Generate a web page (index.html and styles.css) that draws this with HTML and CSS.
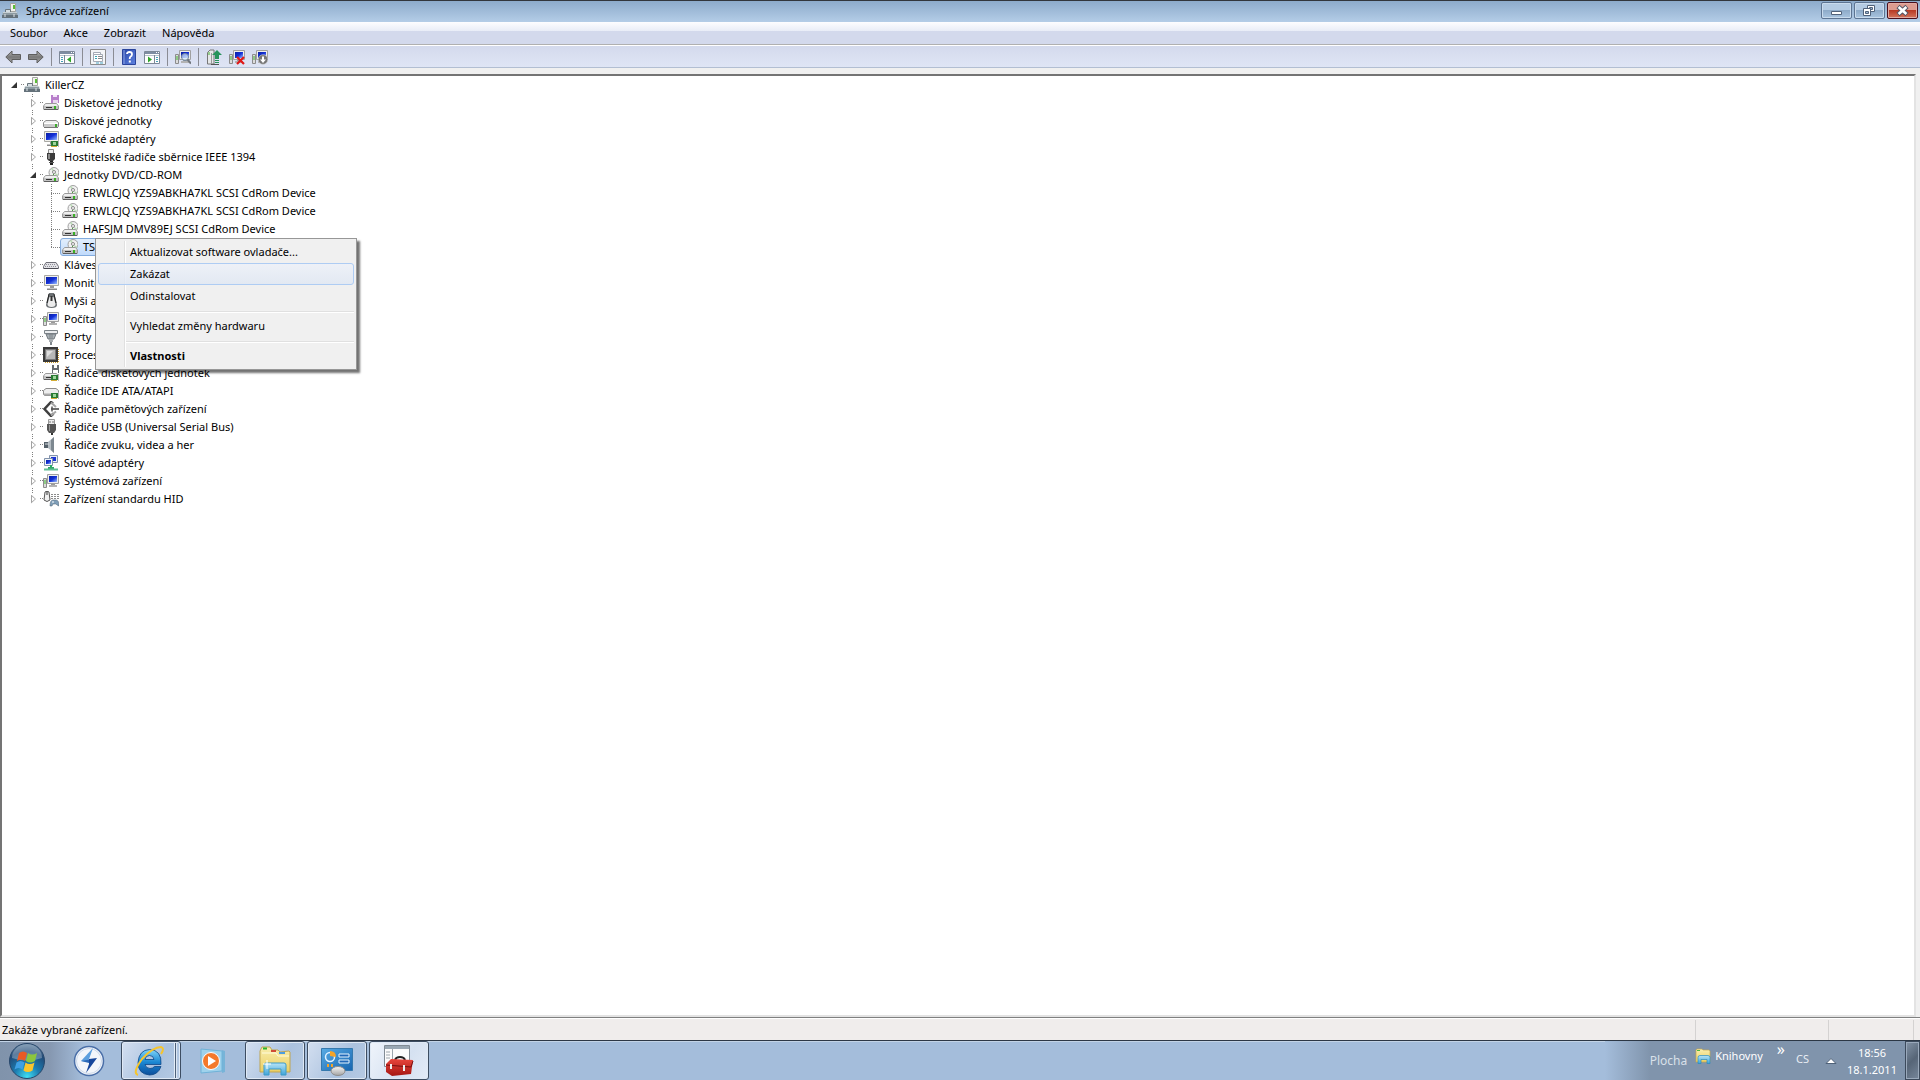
FILE: index.html
```html
<!DOCTYPE html>
<html lang="cs">
<head>
<meta charset="utf-8">
<title>Správce zařízení</title>
<link rel="stylesheet" href="styles.css">
</head>
<body>
<svg class="defs" width="0" height="0" aria-hidden="true">
  <defs>
    <linearGradient id="gMetal" x1="0" y1="0" x2="0" y2="1"><stop offset="0" stop-color="#f6f6f6"/><stop offset="1" stop-color="#a3a3a3"/></linearGradient>
    <linearGradient id="gScreen" x1="0" y1="0" x2="1" y2="1"><stop offset="0" stop-color="#0a1fa0"/><stop offset=".5" stop-color="#1330d8"/><stop offset="1" stop-color="#9cc0ff"/></linearGradient>
    <linearGradient id="gArrow" x1="0" y1="0" x2="0" y2="1"><stop offset="0" stop-color="#b5b5b5"/><stop offset=".5" stop-color="#787878"/><stop offset="1" stop-color="#a8a8a8"/></linearGradient>
    <linearGradient id="gHelp" x1="0" y1="0" x2="1" y2="1"><stop offset="0" stop-color="#2745a8"/><stop offset="1" stop-color="#5f83e0"/></linearGradient>
    <linearGradient id="gFolder" x1="0" y1="0" x2="0" y2="1"><stop offset="0" stop-color="#f8eeae"/><stop offset="1" stop-color="#eccf62"/></linearGradient>
    <linearGradient id="gGlass" x1="0" y1="0" x2="0" y2="1"><stop offset="0" stop-color="#b6e4f7"/><stop offset="1" stop-color="#3fa4d8"/></linearGradient>
    <radialGradient id="gOrb" cx=".5" cy=".95" r=".9"><stop offset="0" stop-color="#3fe0f4"/><stop offset=".4" stop-color="#1c7cb0"/><stop offset=".8" stop-color="#214a78"/><stop offset="1" stop-color="#4f7396"/></radialGradient>
    <linearGradient id="gIe" x1="0" y1="0" x2="0" y2="1"><stop offset="0" stop-color="#7fd5fa"/><stop offset=".5" stop-color="#1b87d2"/><stop offset="1" stop-color="#0d4f9c"/></linearGradient>
    <linearGradient id="gPanel" x1="0" y1="0" x2="1" y2="1"><stop offset="0" stop-color="#58abe4"/><stop offset="1" stop-color="#1765b0"/></linearGradient>
    <linearGradient id="gRed" x1="0" y1="0" x2="0" y2="1"><stop offset="0" stop-color="#e8463c"/><stop offset="1" stop-color="#a51612"/></linearGradient>
  </defs>
  <symbol id="drive" viewBox="0 0 16 16">
    <path d="M2.500 8.500h11l2 2.500v3q0 .5-.5.5H1q-.5 0-.5-.5v-3z" fill="#efefef" stroke="#9a9a9a"/>
    <path d="M1 11h14v3H1z" fill="#c2c2c2"/><path d="M1 14.500h14" stroke="#5f5f5f"/>
    <path d="M3 12.500h6" stroke="#333"/><path d="M11 11h2v3h-2z" fill="#39b026"/>
  </symbol>
  <symbol id="i-computer" viewBox="0 0 16 16">
    <path d="M8.500.5h5v8h-5z" fill="#f2f2ee" stroke="#a5a5a0"/><path d="M11 2h2v4h-2z" fill="#59bd35"/>
    <path d="M3.500 6.500h5v3h-5z" fill="#d5dde2" stroke="#68757c"/>
    <path d="M1 9h14l1 5.500H0z" fill="#8e9ba2"/><path d="M1 9.500h14" stroke="#c7d0d4"/>
    <path d="M0 12h16v3H0z" fill="#64717a"/><path d="M3 11v3M12 11v3" stroke="#dfe5e8"/>
  </symbol>
  <symbol id="i-floppy" viewBox="0 0 16 16">
    <path d="M8 0h8v8H8z" fill="#b87fcb"/><path d="M10 0h4v2h-4z" fill="#f4e8f8"/><path d="M10 5h5v3h-5z" fill="#ead7f0"/><use href="#drive"/>
  </symbol>
  <symbol id="i-disk" viewBox="0 0 16 16">
    <path d="M3 7.500h10l2.500 2v4l-1 1h-13l-1-1v-4z" fill="#f0f0f0" stroke="#8c8c8c"/>
    <path d="M1 10.500h14" stroke="#fff"/><path d="M1 11h14v3H1z" fill="#cbcbcb"/><path d="M1 14.500h14" stroke="#777"/><path d="M12 11h2v3h-2z" fill="#3cab2d"/>
  </symbol>
  <symbol id="monitor" viewBox="0 0 16 16">
    <path d="M1.500.5h14v10h-14z" fill="#f0f0ec" stroke="#a9a9a4"/><path d="M3 2h11v7H3z" fill="url(#gScreen)"/>
    <path d="M7 11h4v2H7z" fill="#9a9a9a"/><path d="M4 13h10v2H4z" fill="#c5c5c5"/><path d="M4 14.500h10" stroke="#8a8a8a"/>
  </symbol>
  <symbol id="card" viewBox="0 0 16 16">
    <path d="M8 10h7v5H8z" fill="#2a7b35"/><path d="M10 11h3v3h-3z" fill="#9fd59c"/><path d="M8 15.500h6" stroke="#d3ac35"/><path d="M15.500 9v7" stroke="#b7b7b7"/>
  </symbol>
  <symbol id="i-display" viewBox="0 0 16 16"><use href="#monitor"/><use href="#card"/></symbol>
  <symbol id="i-monitor" viewBox="0 0 16 16"><use href="#monitor"/></symbol>
  <symbol id="i-firewire" viewBox="0 0 16 16">
    <path d="M5.500.5h5v4h-5z" fill="#eee" stroke="#8b8b8b"/><path d="M4 4h8v6l-2 2H6l-2-2z" fill="#3b3b3b"/><path d="M5 5h2v5H5z" fill="#8c8c8c"/><path d="M7 12h3v4H7z" fill="#222"/><path d="M6 13.500h5" stroke="#555"/>
  </symbol>
  <symbol id="i-cd" viewBox="0 0 16 16">
    <circle cx="11" cy="5.500" r="5" fill="#f1f1f1" stroke="#a0a0a0"/><path d="M11 5.500 8 2l2-1zM11 5.500l3 4 1-2z" fill="#b9dcb5"/><circle cx="11" cy="5" r="1.500" fill="#fff" stroke="#888"/><path d="M10.500 7v3" stroke="#49a53a"/><use href="#drive"/>
  </symbol>
  <symbol id="i-keyboard" viewBox="0 0 16 16">
    <path d="M3 5.500h10l2.500 4v2H.5v-2z" fill="#e2e2e6" stroke="#6f6f78"/><path d="M3 7.500h10M2 9.500h12" stroke="#8e8e98" stroke-dasharray="1 1"/><path d="M1 11.500h14" stroke="#4a4a52"/>
  </symbol>
  <symbol id="i-mouse" viewBox="0 0 16 16">
    <path d="M6 0h5l2 7 1 5q0 3-5.500 3T3 12l1-5z" fill="#6b7073"/><path d="M6.500 4h4l2 7q0 3-4 3t-4-3z" fill="#ececec"/><path d="M6 1l-2 9M11 1l2 9" stroke="#222" fill="none"/><path d="M8.500 3v5" stroke="#333" stroke-width="2"/>
  </symbol>
  <symbol id="i-pc" viewBox="0 0 16 16">
    <path d="M.5 5.500h3v9h-3z" fill="#dcdcdc" stroke="#8c8c8c"/><path d="M2 7v4" stroke="#40b82e"/>
    <path d="M4.500 1.500h11v9h-11z" fill="#eee" stroke="#a0a0a0"/><path d="M6 3h8v6H6z" fill="url(#gScreen)"/><path d="M8 11h4v1H8z" fill="#999"/><path d="M6 13h8" stroke="#b3b3b3" stroke-width="2"/>
  </symbol>
  <symbol id="i-port" viewBox="0 0 16 16">
    <path d="M1.500 1.500h13v3h-13z" fill="#eaecee" stroke="#7d8489"/><path d="M3 5h10l-2 5H5z" fill="#aab1b6" stroke="#72797e"/><path d="M6 10h4v3H6z" fill="#d4d8db"/><path d="M7 5v8M9 5v8" stroke="#7c8387"/><path d="M7 13h2v3H7z" fill="#81888d"/>
  </symbol>
  <symbol id="i-cpu" viewBox="0 0 16 16">
    <path d="M15.500 2v13M2 15.500h13" stroke="#c99a2c" stroke-dasharray="1 1"/><path d="M0 0h15v15H0z" fill="#393939"/><path d="M2.500 2.500h10v10h-10z" fill="#b7b7b7" stroke="#777"/><path d="M4 4h6L4 10z" fill="#dedede"/>
  </symbol>
  <symbol id="i-fdc" viewBox="0 0 16 16">
    <path d="M9 0h7v8H9z" fill="#656b70"/><path d="M11 0h3v3h-3zM10 5h5v3h-5z" fill="#fff"/><use href="#drive"/><use href="#card"/>
  </symbol>
  <symbol id="i-ide" viewBox="0 0 16 16"><path d="M3 5.500h10l2.500 2v4l-1 1h-13l-1-1v-4z" fill="#eee" stroke="#8c8c8c"/><path d="M1 11.500h13" stroke="#aaa" stroke-width="2"/><use href="#card"/></symbol>
  <symbol id="i-memory" viewBox="0 0 16 16">
    <path d="M10 2.500 8 1 1.500 8 8 15l2.500-2.500" fill="none" stroke="#3f3f3f" stroke-width="2.500"/><path d="M8 1.500 13 6M8 14.500l5-4" stroke="#a6a6a6" stroke-width="2"/><path d="M8 8h8" stroke="#6f6f6f" stroke-width="2"/><path d="M9 5.500v5" stroke="#555" stroke-width="1.500"/>
  </symbol>
  <symbol id="i-usb" viewBox="0 0 16 16">
    <path d="M5.500.5h6v5h-6z" fill="#eee" stroke="#999"/><path d="M7 2v2M10 2v2" stroke="#777"/><path d="M4 5h9v6l-2 3H6l-2-3z" fill="#555"/><path d="M6 6h1v6H6z" fill="#999"/><path d="M8 14h2v2H8z" fill="#333"/>
  </symbol>
  <symbol id="i-sound" viewBox="0 0 16 16">
    <path d="M1 5h4v6H1z" fill="#55616a"/><path d="M5 5l6-5v16l-6-5z" fill="#b4bcc2"/><path d="M8 3l3-3v16l-3-3z" fill="#7d8890"/><path d="M2 7h4" stroke="#d5dade"/>
  </symbol>
  <symbol id="i-network" viewBox="0 0 16 16">
    <path d="M6.500.5h8v7h-8z" fill="#e9eef5" stroke="#8293ac"/><path d="M8 2h5v4H8z" fill="#1b35d5"/><path d="M1.500 3.500h8v7h-8z" fill="#f1f4f8" stroke="#8293ac"/><path d="M3 5h5v4H3z" fill="url(#gScreen)"/><path d="M7 10h2v3H7zM5 12h6v2H5z" fill="#2fa866"/><path d="M1 14.500h14" stroke="#5fbd93" stroke-width="2"/>
  </symbol>
  <symbol id="i-hid" viewBox="0 0 16 16">
    <path d="M2 1q2-2 4 0l1 8q-3 3-6 0z" fill="#f0f0f0" stroke="#555"/><path d="M4 0v4" stroke="#333"/><path d="M8 3.500h8M8 5.500h8M8 7.500h8" stroke="#8b8b8b" stroke-dasharray="2 1"/><path d="M7 15q0-6 3-6h3q3 0 3 6l-2-1-1-1h-3l-1 2z" fill="#7f9eb8" stroke="#4d6172" stroke-width=".5"/><path d="M9 11h2" stroke="#fff"/>
  </symbol>
  <symbol id="i-back" viewBox="0 0 16 16"><path d="M.8 8 7 2v3.500h8.500v5H7V14z" fill="url(#gArrow)" stroke="#5e5e5e"/></symbol>
  <symbol id="i-forward" viewBox="0 0 16 16"><path d="M15.200 8 9 2v3.500H.5v5H9V14z" fill="url(#gArrow)" stroke="#5e5e5e"/></symbol>
  <symbol id="pane" viewBox="0 0 16 16"><path d="M.5 2.500h15v12H.5z" fill="#fdfdfd" stroke="#7d8898"/><path d="M1 4h14" stroke="#7e8ca2" stroke-width="2"/><path d="M12 3.500h3" stroke="#fff" stroke-dasharray="1 1"/><path d="M1 6.500h14" stroke="#b8c0cc"/></symbol>
  <symbol id="i-tree" viewBox="0 0 16 16"><use href="#pane"/><path d="M5.500 6v8" stroke="#7d8898"/><path d="M2 8.500h2M2 10.500h2M2 12.500h2" stroke="#45a0b8"/><path d="M12 7.500v6L8 10.500z" fill="#30a52a"/></symbol>
  <symbol id="i-run" viewBox="0 0 16 16"><use href="#pane"/><path d="M10.500 6v8" stroke="#7d8898"/><path d="M12 8.500h2M12 10.500h2M12 12.500h2" stroke="#45a0b8"/><path d="M4 7.500v6l4-3z" fill="#30a52a"/></symbol>
  <symbol id="i-props" viewBox="0 0 16 16"><path d="M.5.5h15v15H.5z" fill="#f4f5f7" stroke="#8b8b8b"/><path d="M3.500 3.500h7v2h-7zM3.500 5.500h9v7h-9z" fill="#fff" stroke="#a4aab5"/><path d="M5 7.500h2M5 9.500h2" stroke="#39a5b5"/><path d="M8 7.500h4M8 9.500h4" stroke="#888"/><path d="M6 14h3M10 14h3" stroke="#4da7c5"/></symbol>
  <symbol id="i-help" viewBox="0 0 16 16"><path d="M1.500.5h13v15h-13z" fill="url(#gHelp)" stroke="#2a449c"/><path d="M3 1v14" stroke="#8da5e6"/><path d="M6 5q0-2 2.500-2T11 5.300Q11 7 9.500 7.600 8.700 8 8.700 10" fill="none" stroke="#fff" stroke-width="1.800"/><path d="M7.800 11.500h2v2h-2z" fill="#fff"/></symbol>
  <symbol id="i-scan" viewBox="0 0 16 16"><use href="#i-pc"/><circle cx="10" cy="8" r="3.500" fill="#d9ecf9" fill-opacity=".7" stroke="#72879b"/><path d="M12.500 10.500 16 14.500" stroke="#70767c" stroke-width="2"/></symbol>
  <symbol id="i-update" viewBox="0 0 16 16"><path d="M1.500 3.500 4 1h4v14H1.500z" fill="#e6e8e8" stroke="#777"/><path d="M3 3v3" stroke="#48b135"/><path d="M5.500 4v11" stroke="#999"/><path d="M5 15.500h8" stroke="#555"/><path d="M11 1l5 5h-3v4H9V6H6z" fill="#27935a"/><path d="M9 11.500h4M9 13.500h4" stroke="#27935a"/></symbol>
  <symbol id="i-uninstall" viewBox="0 0 16 16"><use href="#i-pc"/><path d="M8 8l7 7M15 8l-7 7" stroke="#e01818" stroke-width="2.200"/></symbol>
  <symbol id="i-disable" viewBox="0 0 16 16"><use href="#i-pc"/><circle cx="11" cy="10.500" r="4.800" fill="#777" stroke="#ccc" stroke-width=".6"/><path d="M10 7.500h2v3h2l-3 3.500-3-3.500h2z" fill="#fff"/></symbol>
  <symbol id="i-folder" viewBox="0 0 16 16"><path d="M1 2l1-1h5l1 1h6l1 1v11H1z" fill="url(#gFolder)" stroke="#c5a84c" stroke-width=".7"/><path d="M2 2.500h3" stroke="#4cb93f"/><path d="M3 15.500v-6q0-2 2-2h8q2 0 2 2v6h-3v-4H6v4z" fill="url(#gGlass)" stroke="#288cc1" stroke-width=".7"/></symbol>
</svg>

<header class="titlebar">
  <svg class="ico"><use href="#i-computer"/></svg>
  <h1>Správce zařízení</h1>
  <div class="caption-buttons">
    <button class="cap" aria-label="Minimalizovat"><svg viewBox="0 0 29 15"><path d="M9.500 8.500h10v3h-10z" fill="#fff" stroke="#51627a"/></svg></button>
    <button class="cap" aria-label="Obnovit"><svg viewBox="0 0 29 15"><path d="M12.500 2.500h7v6h-7z" fill="#fff" stroke="#51627a"/><path d="M14.500 4.500h3v2h-3z" fill="#9db8d4" stroke="#51627a"/><path d="M8.500 5.500h7v7h-7z" fill="#fff" stroke="#51627a"/><path d="M10.500 8.500h3v2h-3z" fill="#9db8d4" stroke="#51627a"/></svg></button>
    <button class="cap close" aria-label="Zavřít"><svg viewBox="0 0 29 15"><path d="M10 3.500l9 8M19 3.500l-9 8" stroke="#535666" stroke-width="4.600"/><path d="M10.600 4l7.800 7M18.400 4l-7.800 7" stroke="#fff" stroke-width="2.600"/></svg></button>
  </div>
</header>

<nav class="menubar">
  <button>Soubor</button><button>Akce</button><button>Zobrazit</button><button>Nápověda</button>
</nav>

<div class="toolbar" role="toolbar">
  <button aria-label="Zpět"><svg class="ico"><use href="#i-back"/></svg></button>
  <button aria-label="Vpřed"><svg class="ico"><use href="#i-forward"/></svg></button>
  <i class="tsep"></i>
  <button aria-label="Strom konzoly"><svg class="ico"><use href="#i-tree"/></svg></button>
  <i class="tsep"></i>
  <button aria-label="Vlastnosti"><svg class="ico"><use href="#i-props"/></svg></button>
  <i class="tsep"></i>
  <button aria-label="Nápověda"><svg class="ico"><use href="#i-help"/></svg></button>
  <button aria-label="Podokno akcí"><svg class="ico"><use href="#i-run"/></svg></button>
  <i class="tsep"></i>
  <button aria-label="Vyhledat změny hardwaru"><svg class="ico"><use href="#i-scan"/></svg></button>
  <i class="tsep"></i>
  <button aria-label="Aktualizovat software ovladače"><svg class="ico"><use href="#i-update"/></svg></button>
  <button aria-label="Odinstalovat"><svg class="ico"><use href="#i-uninstall"/></svg></button>
  <button aria-label="Zakázat"><svg class="ico"><use href="#i-disable"/></svg></button>
</div>

<main class="client">
  <ul class="tree">
    <li><div class="row root"><button class="twisty open" aria-label="Sbalit"></button><svg class="ico"><use href="#i-computer"/></svg><span>KillerCZ</span></div>
      <ul class="branch">
        <li><div class="row"><button class="twisty" aria-label="Rozbalit"></button><svg class="ico"><use href="#i-floppy"/></svg><span>Disketové jednotky</span></div></li>
        <li><div class="row"><button class="twisty" aria-label="Rozbalit"></button><svg class="ico"><use href="#i-disk"/></svg><span>Diskové jednotky</span></div></li>
        <li><div class="row"><button class="twisty" aria-label="Rozbalit"></button><svg class="ico"><use href="#i-display"/></svg><span>Grafické adaptéry</span></div></li>
        <li><div class="row"><button class="twisty" aria-label="Rozbalit"></button><svg class="ico"><use href="#i-firewire"/></svg><span>Hostitelské řadiče sběrnice IEEE 1394</span></div></li>
        <li><div class="row"><button class="twisty open" aria-label="Sbalit"></button><svg class="ico"><use href="#i-cd"/></svg><span>Jednotky DVD/CD-ROM</span></div>
          <ul class="leaves">
            <li class="row"><svg class="ico"><use href="#i-cd"/></svg><span>ERWLCJQ YZS9ABKHA7KL SCSI CdRom Device</span></li>
            <li class="row"><svg class="ico"><use href="#i-cd"/></svg><span>ERWLCJQ YZS9ABKHA7KL SCSI CdRom Device</span></li>
            <li class="row"><svg class="ico"><use href="#i-cd"/></svg><span>HAFSJM DMV89EJ SCSI CdRom Device</span></li>
            <li class="row"><div class="selected"><svg class="ico"><use href="#i-cd"/></svg><span>TSST</span></div></li>
          </ul>
        </li>
        <li><div class="row"><button class="twisty" aria-label="Rozbalit"></button><svg class="ico"><use href="#i-keyboard"/></svg><span>Klávesnice</span></div></li>
        <li><div class="row"><button class="twisty" aria-label="Rozbalit"></button><svg class="ico"><use href="#i-monitor"/></svg><span>Monitory</span></div></li>
        <li><div class="row"><button class="twisty" aria-label="Rozbalit"></button><svg class="ico"><use href="#i-mouse"/></svg><span>Myši a jiná</span></div></li>
        <li><div class="row"><button class="twisty" aria-label="Rozbalit"></button><svg class="ico"><use href="#i-pc"/></svg><span>Počítač</span></div></li>
        <li><div class="row"><button class="twisty" aria-label="Rozbalit"></button><svg class="ico"><use href="#i-port"/></svg><span>Porty</span></div></li>
        <li><div class="row"><button class="twisty" aria-label="Rozbalit"></button><svg class="ico"><use href="#i-cpu"/></svg><span>Procesory</span></div></li>
        <li><div class="row"><button class="twisty" aria-label="Rozbalit"></button><svg class="ico"><use href="#i-fdc"/></svg><span>Řadiče disketových jednotek</span></div></li>
        <li><div class="row"><button class="twisty" aria-label="Rozbalit"></button><svg class="ico"><use href="#i-ide"/></svg><span>Řadiče IDE ATA/ATAPI</span></div></li>
        <li><div class="row"><button class="twisty" aria-label="Rozbalit"></button><svg class="ico"><use href="#i-memory"/></svg><span>Řadiče paměťových zařízení</span></div></li>
        <li><div class="row"><button class="twisty" aria-label="Rozbalit"></button><svg class="ico"><use href="#i-usb"/></svg><span>Řadiče USB (Universal Serial Bus)</span></div></li>
        <li><div class="row"><button class="twisty" aria-label="Rozbalit"></button><svg class="ico"><use href="#i-sound"/></svg><span>Řadiče zvuku, videa a her</span></div></li>
        <li><div class="row"><button class="twisty" aria-label="Rozbalit"></button><svg class="ico"><use href="#i-network"/></svg><span>Síťové adaptéry</span></div></li>
        <li><div class="row"><button class="twisty" aria-label="Rozbalit"></button><svg class="ico"><use href="#i-pc"/></svg><span>Systémová zařízení</span></div></li>
        <li><div class="row"><button class="twisty" aria-label="Rozbalit"></button><svg class="ico"><use href="#i-hid"/></svg><span>Zařízení standardu HID</span></div></li>
      </ul>
    </li>
  </ul>
</main>

<div class="context-menu" role="menu">
  <button role="menuitem">Aktualizovat software ovladače...</button>
  <button role="menuitem" class="hot">Zakázat</button>
  <button role="menuitem">Odinstalovat</button>
  <hr>
  <button role="menuitem">Vyhledat změny hardwaru</button>
  <hr>
  <button role="menuitem" class="default">Vlastnosti</button>
</div>

<div class="statusbar"><span class="message">Zakáže vybrané zařízení.</span><span class="cell wide"></span><span class="cell"></span></div>

<footer class="taskbar">
  <button class="start" aria-label="Start"><svg viewBox="0 0 38 38">
    <circle cx="19" cy="19" r="17.500" fill="url(#gOrb)" stroke="#27476b"/><path d="M4 16a15 14 0 0 1 30 0q-15 5-30 0z" fill="#fff" fill-opacity=".28"/>
    <path d="M11 11q4-3 8 0l-2 8q-4-3-8 0z" fill="#ea5a24"/><path d="M20 11q4 3 9 0l-2 8q-5 3-9 0z" fill="#8cc63c"/><path d="M8.500 20.500q4-3 8 0l-2 7q-4-3-8 0z" fill="#3fa0e4"/><path d="M17.500 20.500q4 3 9 0l-2 8q-5 3-9 0z" fill="#fbc52c"/></svg></button>
  <button class="pin" aria-label="DAEMON Tools"><svg viewBox="0 0 32 32"><circle cx="16" cy="16" r="14.500" fill="#f3f6fb" stroke="#4a6fa8" stroke-width="1.500"/><circle cx="16" cy="16" r="12.500" fill="none" stroke="#ccd9ea"/><path d="M20 3 8 16l7 1z" fill="#5d9fde"/><path d="M8 16l9-1.500-1 3.500z" fill="#2a68b8"/><path d="M16 14l8-1-11 15 3-9z" fill="#17479c"/></svg></button>
  <button class="task stack" aria-label="Internet Explorer"><svg viewBox="0 0 32 32"><path d="M28 19.500H12q1 4 5 4 3 0 4.500-2H28Q25 30 16.500 30 5 29 5 17.500 6 5 16.500 4.500 29 5 28 19.500zM12 14.500h9q-.5-4-4.500-4t-4.500 4z" fill="url(#gIe)" stroke="#0c4688" stroke-width=".8"/><path d="M5 30Q-1 28 9 14 20 2 28 2q4 1 0 7" fill="none" stroke="#f6c52c" stroke-width="2"/></svg></button>
  <button class="pin media" aria-label="Windows Media Player"><svg viewBox="0 0 32 32"><path d="M25 5l3 1v21l-3 1z" fill="#77b4d8"/><path d="M4 4l21 2v20L4 28z" fill="#9fd2ec" stroke="#6fb2d8"/><circle cx="14" cy="16" r="8.500" fill="#f4792b" stroke="#fff"/><path d="M11 11v10l8-5z" fill="#fff"/></svg></button>
  <button class="task" aria-label="Průzkumník Windows"><svg viewBox="0 0 32 32"><path d="M1 6l2-4h8l2 3h6l2 2 9-1 1 1v20H1z" fill="url(#gFolder)" stroke="#bfa552"/><path d="M4 3.500h4" stroke="#2db52f" stroke-width="2"/><path d="M12 6h5" stroke="#d04b35" stroke-width="2"/><path d="M20 8h6" stroke="#4b9de0" stroke-width="2"/><path d="M3 8h14l2 3h11" fill="none" stroke="#fffbdc"/><path d="M5 30V20q0-2 2-2h18q2 0 2 2v10h-5v-6H10v6z" fill="url(#gGlass)" stroke="#3d9bc9"/><path d="M8 15v9M4 19h8" stroke="#fff"/></svg></button>
  <button class="task" aria-label="Ovládací panely"><svg viewBox="0 0 32 32"><path d="M.5 3.500h31v22H.5z" fill="url(#gPanel)" stroke="#3579ae"/><circle cx="9" cy="12" r="4.500" fill="none" stroke="#dff1ff" stroke-width="1.500"/><path d="M9 6q6 0 6 6l-6-1z" fill="#f5a428"/><path d="M18 9h10v3H18zM18 15h10v3H18z" fill="#2068b8" stroke="#e4f4ff"/><path d="M6 20.500h2M10 20.500h2" stroke="#f5a428" stroke-width="3"/><ellipse cx="17" cy="26" rx="7" ry="4.500" fill="url(#gMetal)" stroke="#8d8d8d"/></svg></button>
  <button class="task active" aria-label="Správce zařízení"><svg viewBox="0 0 32 32"><path d="M1.500.5h25v21h-25z" fill="#fbfbfb" stroke="#818b94"/><path d="M2 2.500h24" stroke="#9aa8b4" stroke-width="3"/><path d="M9.500 4v17M3 7h4M3 10h4M3 13h4" stroke="#9ca6ad"/><path d="M12 15q1-3 5-3t5 3" fill="none" stroke="#222" stroke-width="2"/><path d="M3 19l5-5 22 1-2 14-19 2-6-4z" fill="url(#gRed)"/><path d="M3 20l25 2 2-6" fill="none" stroke="#781010"/><path d="M8 19v5M21 20v6" stroke="#eee" stroke-width="2"/></svg></button>
  <div class="tray">
    <span class="band-title">Plocha</span>
    <a class="library" href="#knihovny"><svg class="ico"><use href="#i-folder"/></svg>Knihovny</a>
    <button class="chevron" aria-label="Další">»</button>
    <span class="lang">CS</span>
    <button class="up" aria-label="Zobrazit skryté ikony"><svg viewBox="0 0 12 8"><path d="M1 6.500h10L6 1.500z" fill="#fff" stroke="#4f6279"/></svg></button>
    <div class="clock"><span>18:56</span><span>18.1.2011</span></div>
    <button class="show-desktop" aria-label="Zobrazit plochu"></button>
  </div>
</footer>
</body>
</html>
```

FILE: styles.css
```css
* { box-sizing: border-box; }

body {
  margin: 0;
  height: 100vh;
  display: flex;
  flex-direction: column;
  overflow: hidden;
  background: #f0f0f0;
  font: 11px/18px "Noto Sans", "Open Sans", sans-serif;
  color: #000;
}

button {
  margin: 0;
  padding: 0;
  border: 0;
  background: none;
  font: inherit;
  color: inherit;
}

ul { margin: 0; padding: 0; list-style: none; }

.defs { position: absolute; }
.ico { width: 16px; height: 16px; flex: none; display: block; }

/* Title bar */
.titlebar {
  display: flex;
  align-items: center;
  height: 22px;
  flex: none;
  padding: 0 2px 2px;
  border-top: 1px solid #32363c;
  background: linear-gradient(#8dabcb, #b4cde7);
}
.titlebar h1 { margin: 0 auto 0 8px; font-size: 11px; font-weight: 400; }
.caption-buttons { display: flex; gap: 2px; }
.cap {
  width: 31px;
  height: 17px;
  border: 1px solid #5d7492;
  border-radius: 2px;
  background: linear-gradient(#b4cbe3 45%, #8eabc9 50%, #a9c5e0);
  box-shadow: inset 0 0 0 1px #c9dbed;
}
.cap svg { display: block; width: 29px; height: 15px; }
.cap.close {
  border-color: #4b0f1c;
  background: linear-gradient(#dd9c90 45%, #b83a25 50%, #d3755c);
  box-shadow: inset 0 0 0 1px #e2aba2;
}

/* Menu and tool bars */
.menubar {
  display: flex;
  align-items: center;
  height: 22px;
  flex: none;
  padding-left: 2px;
  background: linear-gradient(#fdfdff, #e9edf7 40%, #d3d9ec 42%, #d3d9ec);
}
.menubar button { padding: 0 8px; }
.toolbar {
  display: flex;
  align-items: center;
  gap: 7px;
  height: 24px;
  flex: none;
  padding: 2px 0 0 5px;
  border-top: 1px solid #b0b0b0;
  border-bottom: 1px solid #b2bed2;
  box-shadow: inset 0 1px #fff;
  background: linear-gradient(#d3d9ec, #dfe5f5);
}
.toolbar button { height: 16px; }
.tsep { width: 1px; height: 18px; background: #8a8c94; }

/* Device tree */
.client {
  flex: 1;
  min-height: 0;
  margin: 6px 4px 0 0;
  border: 2px solid #747474;
  border-right-color: #e3e3e3;
  border-bottom-color: #e3e3e3;
  background: #fff;
}
.tree { padding-left: 3px; }
.branch, .leaves { padding-left: 19px; }
.row { display: flex; align-items: center; height: 18px; white-space: nowrap; }
.row span { padding-left: 5px; }

.branch > li {
  background: repeating-linear-gradient(#808080 0 1px, #fff 1px 2px) 8px 0 / 1px 100% no-repeat;
}
.branch > li:last-child { background-size: 1px 8px; }

.twisty {
  width: 19px;
  height: 12px;
  display: flex;
  align-items: center;
  justify-content: space-between;
  padding-left: 7px;
  background: linear-gradient(#fff, #fff) 5px 0 / 10px 12px no-repeat;
}
.twisty::before {
  content: "";
  width: 5px;
  height: 9px;
  background: #a2a2a2;
  clip-path: polygon(0 0, 100% 50%, 0 100%, 0 0, 1px 2px, 1px 7px, 4px 50%, 1px 2px);
}
.twisty.open { padding-left: 6px; }
.twisty.open::before {
  width: 6px;
  height: 6px;
  background: #333;
  clip-path: polygon(100% 0, 100% 100%, 0 100%);
}
.twisty::after { content: ""; width: 3px; height: 1px; border-top: 1px dotted #808080; }

.leaves > li {
  padding-left: 18px;
  background:
    repeating-linear-gradient(#808080 0 1px, transparent 1px 2px) 8px 0 / 1px 100% no-repeat,
    repeating-linear-gradient(90deg, #808080 0 1px, transparent 1px 2px) 8px 9px / 10px 1px no-repeat;
}
.leaves > li > .ico { margin-left: 1px; }
.leaves > li:last-child {
  padding-left: 17px;
  background-size: 1px 9px, 9px 1px;
}
.selected {
  display: flex;
  align-items: center;
  height: 18px;
  padding: 0 3px 0 1px;
  border: 1px solid #84acdd;
  border-radius: 3px;
  background: linear-gradient(#e2eefc, #c1dbfc);
}

/* Context menu over the tree */
.context-menu {
  position: absolute;
  left: 95px;
  top: 238px;
  width: 262px;
  padding: 2px;
  border: 1px solid #979797;
  box-shadow: 3px 3px 2px rgba(0, 0, 0, .55);
  background:
    linear-gradient(90deg, #e0e0e0 50%, #fff 50%) 28px 2px / 2px calc(100% - 4px) no-repeat #f0f0f0;
}
.context-menu button {
  display: block;
  width: 100%;
  height: 22px;
  padding-left: 31px;
  border: 1px solid transparent;
  border-radius: 3px;
  text-align: left;
}
.context-menu .hot {
  border-color: #aeccf3;
  background: linear-gradient(rgba(237, 241, 249, .8), rgba(223, 231, 243, .8));
}
.context-menu .default { font-weight: 700; }
.context-menu hr {
  height: 2px;
  margin: 4px 0 2px 28px;
  border: 0;
  border-top: 1px solid #e0e0e0;
  border-bottom: 1px solid #fff;
}

/* Status bar */
.statusbar {
  display: flex;
  align-items: center;
  height: 23px;
  flex: none;
  padding: 2px 6px 0 2px;
  border-top: 1px solid #808080;
  background: #f0edec;
  box-shadow: inset 0 1px #fff;
}
.message { flex: 1; }
.cell { width: 86px; height: 20px; border-left: 1px solid #d4d2d1; border-right: 1px solid #d4d2d1; }
.cell.wide { width: 133px; border-right: 0; }

/* Taskbar */
.taskbar {
  display: flex;
  align-items: center;
  height: 40px;
  flex: none;
  padding-left: 8px;
  border-top: 1px solid #2c3745;
  box-shadow: inset 0 1px #c2d3e6;
  background: linear-gradient(90deg, #8093ab 0, #8698b1 50px, #a4bddb 84px);
}
.start, .start svg { display: block; width: 38px; height: 38px; }
.pin svg, .task svg { display: block; width: 32px; height: 32px; }
.pin { margin-left: 27px; }
.pin.media { margin: 0 16px; }
.task {
  display: flex;
  align-items: center;
  justify-content: center;
  width: 60px;
  height: 39px;
  margin-right: 2px;
  border: 1px solid #3d4d62;
  border-radius: 3px;
  background: linear-gradient(120deg, #d3dff0, #abc2df 60%, #b6cae3);
  box-shadow: inset 0 0 0 1px #dfe9f5;
}
.task.active { background: linear-gradient(120deg, #eff4fb, #d5e1f1 60%, #e3ebf7); }
.task.stack {
  margin: 0 0 0 16px;
  padding-right: 5px;
  background:
    linear-gradient(90deg, #e4edf7 0 1px, #4d6079 1px 2px, #dbe6f3 2px) right 3px top 0 / 3px 100% no-repeat,
    linear-gradient(120deg, #d3dff0, #a9c1de 60%, #b6cae3);
}

.tray {
  display: flex;
  align-items: center;
  align-self: stretch;
  margin-left: auto;
  padding-left: 45px;
  background: linear-gradient(90deg, #a4bddb, #8094ac 45px);
  color: #fff;
}
.band-title { color: #d9e0e9; font-size: 12px; }
.library { display: flex; gap: 4px; margin: 0 14px 10px 8px; color: #fff; text-decoration: none; line-height: 16px; }
.chevron { margin-bottom: 24px; font-size: 16px; }
.lang { margin: 0 16px 4px 11px; color: #e8edf3; }
.up svg { display: block; width: 12px; height: 8px; }
.clock { display: flex; flex-direction: column; width: 68px; padding-left: 2px; text-align: center; line-height: 17px; }
.show-desktop {
  align-self: stretch;
  width: 15px;
  border: 1px solid #3c4a5c;
  background: linear-gradient(135deg, #8393a6, #566577 50%, #77879b);
  box-shadow: inset 0 0 0 1px #9aa9bb;
}
```
